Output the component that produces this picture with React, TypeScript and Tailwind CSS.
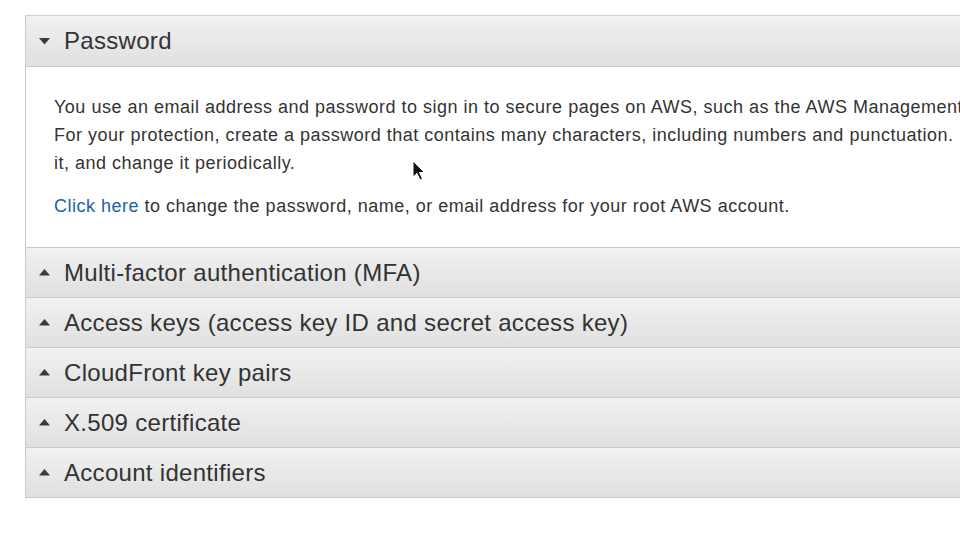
import React from "react";

const font = { fontFamily: '"Liberation Sans", Arial, Helvetica, sans-serif' };

function Caret({ open }: { open: boolean }) {
  return (
    <svg width="11" height="7" viewBox="0 0 11 7" className="shrink-0">
      {open ? (
        <polygon points="0,0 11,0 5.5,6.5" fill="#3a3a3a" />
      ) : (
        <polygon points="0,6.5 11,6.5 5.5,0" fill="#3a3a3a" />
      )}
    </svg>
  );
}

function Header({ title, open, h }: { title: string; open: boolean; h: string }) {
  return (
    <div
      className={`flex items-center gap-[14px] pl-[13px] border-b border-[#cbcbcb] bg-gradient-to-b from-[#f1f1f1] to-[#e0e0e0] ${h}`}
    >
      <Caret open={open} />
      <span className="text-[24px] text-[#333333] leading-none tracking-[0.3px]">{title}</span>
    </div>
  );
}

export default function App() {
  const items = [
    "Multi-factor authentication (MFA)",
    "Access keys (access key ID and secret access key)",
    "CloudFront key pairs",
    "X.509 certificate",
    "Account identifiers",
  ];
  return (
    <div className="relative w-[960px] h-[540px] bg-white overflow-hidden pt-[15px] pl-[25px]" style={font}>
      <div className="w-[1000px] border-t border-l border-b border-[#cbcbcb] border-t-[#d0d0d0]">
        <Header title="Password" open h="h-[51px]" />
        <div className="bg-white border-b border-[#cbcbcb] pt-[26px] pb-[27px] pl-[28px] text-[18px] leading-[28px] text-[#333333] tracking-[0.5px]">
          <p className="whitespace-nowrap">
            You use an email address and password to sign in to secure pages on AWS, such as the AWS Management Console.
          </p>
          <p className="whitespace-nowrap">
            For your protection, create a password that contains many characters, including numbers and punctuation. Protect
          </p>
          <p>it, and change it periodically.</p>
          <p className="mt-[15px] whitespace-nowrap">
            <a className="text-[#1f5fa8]">Click here</a> to change the password, name, or email address for your root AWS account.
          </p>
        </div>
        {items.map((t, i) => (
          <div key={t} className={i === items.length - 1 ? "[&>div]:border-b-0 [&>div]:h-[49px]" : ""}>
            <Header title={t} open={false} h="h-[50px]" />
          </div>
        ))}
      </div>
      <svg className="absolute left-[412px] top-[160px]" width="14" height="22" viewBox="0 0 14 22">
        <path d="M1 1 L1 17 L5 13.5 L8 20 L10.5 19 L7.5 12.5 L12.5 12.5 Z" fill="#111" stroke="#fff" strokeWidth="1" />
      </svg>
    </div>
  );
}
